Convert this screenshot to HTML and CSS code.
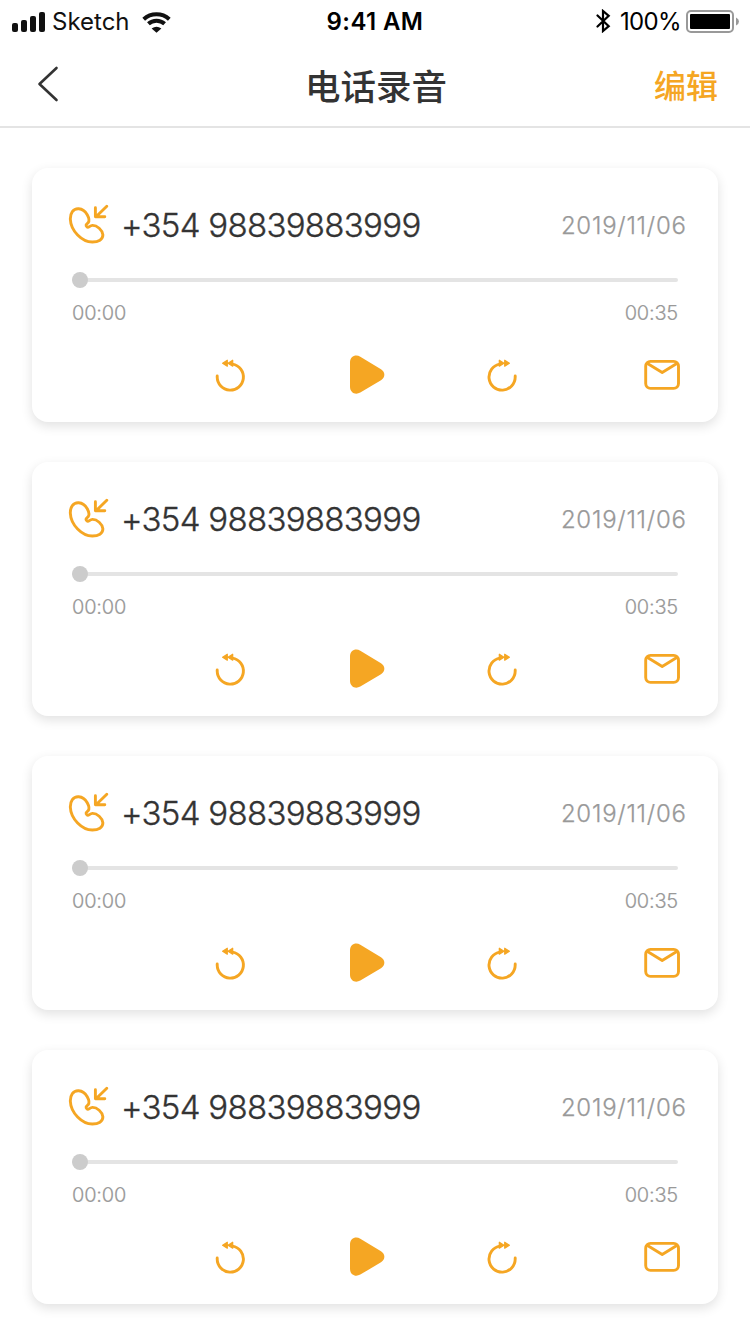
FILE: index.html
```
<!DOCTYPE html>
<html lang="zh-CN">
<head>
<meta charset="utf-8">
<title>电话录音</title>
<link rel="stylesheet" href="styles.css">
</head>
<body>
<svg class="symbols" aria-hidden="true">
  <symbol id="call" viewBox="66 202 44 44"><path d="M78.7 208.7C73 208.3 70.2 213.5 70.3 219C70.8 231 82 242 92.3 242C98.5 242 102.9 239.5 102.9 234.8C102.4 230 97 225.3 92.5 225.4C89.5 225.5 88.6 228.4 87 226.9C85 225.2 86.5 224.3 88.2 222.6C90.5 219.5 86.5 209.2 78.7 208.7ZM106.8 206.3L96 216.8M95.4 207.8V216.8H104.8"/></symbol>
  <symbol id="rewind" viewBox="214 357 34 36"><path d="M217.2 376V377A13.1 13.1 0 1 0 232.5 364.1"/><path class="arrows" d="M222.6 363.2L227.3 360.2V366.2ZM228 363.2L232.7 360.2V366.2Z"/></symbol>
  <symbol id="forward" viewBox="485 357 34 36"><path d="M515.2 376V377A13.1 13.1 0 1 1 499.9 364.1"/><path class="arrows" d="M509.4 363.2L504.7 360.2V366.2ZM504 363.2L499.3 360.2V366.2Z"/></symbol>
  <symbol id="play" viewBox="348 353 38 44"><path class="solid" d="M350 362.5C350 356.5 355.5 353.9 360.3 356.7L381 369.3C385.5 372 385.5 377.5 381 380.3L360.3 392.6C355.5 395.4 350 392.8 350 386.8Z"/></symbol>
  <symbol id="mail" viewBox="642 357 40 36"><rect x="645.7" y="361.4" width="32.8" height="27" rx="4.8"/><path d="M647.5 363.5L662.2 372.5L676.8 363.5"/></symbol>
</svg>
<div class="status">
  <div class="status-left">
    <svg class="signal" viewBox="0 0 34 20"><rect y="11" width="6" height="9" rx="2"/><rect x="9" y="8" width="6" height="12" rx="2"/><rect x="18" y="4" width="6" height="16" rx="2"/><rect x="27" width="6" height="20" rx="2"/></svg>
    <span class="carrier">Sketch</span>
    <svg class="wifi" viewBox="142 11 29 21"><path d="M143.7 18.2A19 19 0 0 1 169.3 18.2M148.4 22.8A12 12 0 0 1 164.6 22.8"/><path class="dot" d="M151.6 27.5Q156.5 23.8 161.4 27.5L156.5 31.8Z"/></svg>
  </div>
  <span class="clock">9:41 AM</span>
  <div class="status-right">
    <svg class="bluetooth" viewBox="596 8 15 24"><path d="M597.5 14.5L608.7 25.2L603 30V10L608.7 14.8L597.5 25.5"/></svg>
    <span class="percent">100%</span>
    <svg class="battery" viewBox="686 8 54 25"><rect x="687" y="10" width="46" height="21" rx="4"/><rect class="charge" x="690" y="13" width="40" height="15" rx="1"/><path class="cap" d="M736 16.5Q739 18 739 20.5T736 24.5Z"/></svg>
  </div>
</div>
<header class="nav">
  <svg class="back" viewBox="36 64 24 40"><path d="M56.5 68L39.5 84L56.5 100"/></svg>
  <h1 class="title">电话录音</h1>
  <a class="edit">编辑</a>
</header>
<main class="list">
  <article class="card">
    <div class="head"><svg class="call"><use href="#call"/></svg><span class="number">+354 98839883999</span><time class="date">2019/11/06</time></div>
    <div class="track"><i class="knob"></i></div>
    <div class="times"><span>00:00</span><span>00:35</span></div>
    <div class="controls"><svg class="rewind"><use href="#rewind"/></svg><svg class="play"><use href="#play"/></svg><svg class="forward"><use href="#forward"/></svg><svg class="mail"><use href="#mail"/></svg></div>
  </article>
  <article class="card">
    <div class="head"><svg class="call"><use href="#call"/></svg><span class="number">+354 98839883999</span><time class="date">2019/11/06</time></div>
    <div class="track"><i class="knob"></i></div>
    <div class="times"><span>00:00</span><span>00:35</span></div>
    <div class="controls"><svg class="rewind"><use href="#rewind"/></svg><svg class="play"><use href="#play"/></svg><svg class="forward"><use href="#forward"/></svg><svg class="mail"><use href="#mail"/></svg></div>
  </article>
  <article class="card">
    <div class="head"><svg class="call"><use href="#call"/></svg><span class="number">+354 98839883999</span><time class="date">2019/11/06</time></div>
    <div class="track"><i class="knob"></i></div>
    <div class="times"><span>00:00</span><span>00:35</span></div>
    <div class="controls"><svg class="rewind"><use href="#rewind"/></svg><svg class="play"><use href="#play"/></svg><svg class="forward"><use href="#forward"/></svg><svg class="mail"><use href="#mail"/></svg></div>
  </article>
  <article class="card">
    <div class="head"><svg class="call"><use href="#call"/></svg><span class="number">+354 98839883999</span><time class="date">2019/11/06</time></div>
    <div class="track"><i class="knob"></i></div>
    <div class="times"><span>00:00</span><span>00:35</span></div>
    <div class="controls"><svg class="rewind"><use href="#rewind"/></svg><svg class="play"><use href="#play"/></svg><svg class="forward"><use href="#forward"/></svg><svg class="mail"><use href="#mail"/></svg></div>
  </article>
</main>
</body>
</html>
```
FILE: styles.css
```
* { box-sizing: border-box; }
body { margin: 0; width: 750px; height: 1334px; overflow: hidden; background: #fff; color: #333; font-family: Inter, "Noto Sans CJK SC", sans-serif; }
svg { display: block; flex: none; fill: none; stroke: #f5a623; stroke-width: 2.9; stroke-linecap: round; stroke-linejoin: round; }
span, time, a { white-space: nowrap; }
.symbols { position: absolute; width: 0; height: 0; }
.solid { fill: #f5a623; stroke: none; }
.arrows { fill: #f5a623; stroke-width: 1.2; }

.status { display: grid; grid-template-columns: 250px 250px 250px; height: 40px; align-items: center; color: #111; }
.status-left { display: flex; align-items: center; padding: 2px 0 0 12px; }
.signal { width: 34px; height: 20px; fill: #111; stroke: none; }
.carrier { width: 90px; padding-left: 6px; font-size: 24px; line-height: 30px; }
.wifi { width: 29px; height: 21px; margin-left: 6px; stroke: #111; stroke-width: 4; stroke-linecap: butt; }
.dot { fill: #111; stroke: none; }
.clock { padding-top: 1px; text-align: center; font-size: 24px; font-weight: 600; letter-spacing: .4px; color: #000; line-height: 40px; }
.status-right { display: flex; align-items: center; padding-left: 96px; color: #000; }
.bluetooth { width: 15px; height: 24px; stroke: #000; stroke-width: 2.2; stroke-linejoin: miter; }
.percent { width: 66px; margin-left: 9px; padding-top: 2px; font-size: 24px; letter-spacing: -.7px; line-height: 40px; }
.battery { width: 54px; height: 25px; stroke: #999; stroke-width: 2; }
.charge { fill: #000; stroke: none; }
.cap { fill: #999; stroke: none; }

.nav { display: grid; grid-template-columns: 150px 450px 118px; align-items: center; height: 88px; border-bottom: 2px solid #e4e4e4; }
.back { width: 24px; height: 40px; margin: 2px 0 0 36px; stroke: #333; stroke-width: 2.6; }
.title { margin: 0; padding: 4px 0 0 2px; text-align: center; font-family: "Noto Sans CJK SC", sans-serif; font-size: 35.5px; line-height: 52px; font-weight: 500; }
.edit { padding-top: 2px; text-align: right; font-family: "Noto Sans CJK SC", sans-serif; font-size: 32px; line-height: 48px; font-weight: 500; color: #f5a623; }

.list { display: flex; flex-direction: column; gap: 40px; padding: 40px 32px; }
.card { flex: none; height: 254px; border-radius: 16px; background: #fff; box-shadow: 0 4px 12px rgba(0, 0, 0, .12); }
.head { display: flex; align-items: center; height: 110px; padding: 2px 32px 0 34px; }
.call { width: 44px; height: 44px; }
.number { margin-left: 11px; padding-top: 1px; font-size: 33px; font-weight: 300; letter-spacing: -.7px; -webkit-text-stroke: .35px #333; line-height: 44px; }
.date { margin: 0 -.7px 0 auto; font-size: 24px; font-weight: 300; letter-spacing: .75px; -webkit-text-stroke: .25px #999; color: #999; line-height: 34px; padding-top: 4px; }
.track { display: flex; align-items: center; height: 4px; margin: 0 40px; border-radius: 2px; background: #e4e4e4; }
.knob { flex: none; width: 16px; height: 16px; border-radius: 50%; background: #ccc; }
.times { display: flex; justify-content: space-between; padding: 17px 40px 0; font-size: 20px; font-weight: 300; letter-spacing: -.2px; -webkit-text-stroke: .2px #999; line-height: 28px; color: #999; }
.controls { display: grid; grid-template-columns: 134px 137px 157px 40px; align-items: center; padding: 26px 0 0 182px; }
.rewind, .forward { width: 34px; height: 36px; }
.play { width: 38px; height: 44px; }
.mail { width: 40px; height: 36px; }
```
